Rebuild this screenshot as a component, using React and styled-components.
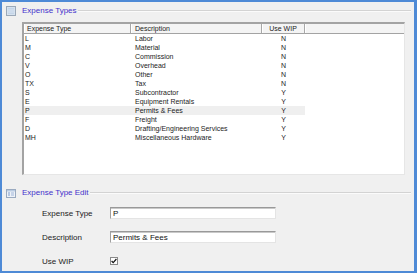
import React from "react";
import styled, { createGlobalStyle } from "styled-components";

const Global = createGlobalStyle`
  html, body { margin: 0; padding: 0; background: #f0f0f0; }
  * { box-sizing: border-box; }
`;

const Frame = styled.div`
  width: 417px;
  height: 273px;
  border: 2px solid #4e8ad6;
  border-right-width: 3px;
  background: #f0f0f0;
  display: flex;
  flex-direction: column;
  padding: 3px 3px 0 4px;
  font-family: "Liberation Sans", Arial, sans-serif;
  color: #1c1c1c;
  overflow: hidden;
`;

const SectionHeader = styled.div`
  display: flex;
  align-items: center;
  height: 12px;
  margin-top: ${(p) => p.$top || 0}px;
`;

const SectionTitle = styled.span`
  font-size: 8px;
  color: #4433cc;
  margin-left: 6px;
  white-space: nowrap;
  line-height: 12px;
`;

const Rule = styled.div`
  flex: 1;
  height: 2px;
  margin-left: 1px;
  border-top: 1px solid #d3d3d3;
  border-bottom: 1px solid #fbfbfb;
`;

const TableBox = styled.div`
  margin: 5px 0 0 16px;
  width: 383px;
  height: 153px;
  background: #ffffff;
  border-left: 2px solid #a3a3a3;
  border-top: 2px solid #a3a3a3;
  border-right: 1px solid #e6e6e6;
  border-bottom: 1px solid #e6e6e6;
  display: flex;
  flex-direction: column;
  font-size: 7px;
`;

const Grid = styled.div`
  display: grid;
  grid-template-columns: 107px 131px 43px 1fr;
`;

const HeadCell = styled.div`
  height: 10px;
  line-height: 9px;
  background: #f4f4f4;
  border-bottom: 1px solid #a3a3a3;
  border-right: ${(p) => (p.$last ? "none" : "1px solid #a8a8a8")};
  box-shadow: inset 1px 0 #ffffff;
  padding-left: ${(p) => (p.$center ? 0 : p.$pad || 3)}px;
  text-align: ${(p) => (p.$center ? "center" : "left")};
  color: #222;
  white-space: nowrap;
`;

const Row = styled.div`
  display: grid;
  grid-template-columns: 107px 131px 43px;
  width: 281px;
  height: 9px;
  line-height: 9px;
  background: ${(p) => (p.$selected ? "#efefef" : "transparent")};
`;

const Cell = styled.div`
  padding-left: ${(p) => (p.$center ? 0 : p.$pad || 1)}px;
  text-align: ${(p) => (p.$center ? "center" : "left")};
  white-space: nowrap;
  overflow: hidden;
`;

const Form = styled.div`
  display: flex;
  flex-direction: column;
  padding-left: 36px;
  margin-top: 8px;
  gap: 12px;
`;

const FormRow = styled.div`
  display: flex;
  align-items: center;
  height: 12px;
`;

const Label = styled.span`
  width: 68px;
  font-size: 8px;
  color: #222;
`;

const TextBox = styled.div`
  width: 166px;
  height: 12px;
  background: #ffffff;
  border-top: 1px solid #999999;
  border-left: 1px solid #a0a0a0;
  border-right: 1px solid #e4e4e4;
  border-bottom: 1px solid #e4e4e4;
  box-shadow: inset 0 1px #c9c9c9;
  font-size: 8px;
  line-height: 11px;
  padding-left: 2px;
  color: #111;
`;

const Check = styled.div`
  width: 8px;
  height: 8px;
  border: 1px solid #8a8a8a;
  background: #fff;
  display: flex;
  align-items: center;
  justify-content: center;
`;

const GridIcon = () => (
  <svg width="10" height="10" viewBox="0 0 10 10">
    <rect x="0.5" y="0.5" width="9" height="9" fill="#d6e2ef" stroke="#9aa8b8" />
    <rect x="2" y="2" width="6" height="6" fill="#c4d5e8" />
    <line x1="2" y1="4" x2="8" y2="4" stroke="#e8eef6" strokeWidth="0.6" />
    <line x1="2" y1="6" x2="8" y2="6" stroke="#e8eef6" strokeWidth="0.6" />
  </svg>
);

const FormIcon = () => (
  <svg width="10" height="9" viewBox="0 0 10 9">
    <rect x="0.5" y="0.5" width="9" height="8" fill="#eef2f8" stroke="#9aaac0" />
    <rect x="1" y="1" width="8" height="1.5" fill="#b9cbe2" />
    <rect x="2" y="3.5" width="2" height="1" fill="#7f9ccc" />
    <rect x="5" y="3.5" width="3" height="1" fill="#9fb6da" />
    <rect x="2" y="5.5" width="2" height="1" fill="#7f9ccc" />
    <rect x="5" y="5.5" width="3" height="1" fill="#9fb6da" />
  </svg>
);

const rows = [
  ["L", "Labor", "N"],
  ["M", "Material", "N"],
  ["C", "Commission", "N"],
  ["V", "Overhead", "N"],
  ["O", "Other", "N"],
  ["TX", "Tax", "N"],
  ["S", "Subcontractor", "Y"],
  ["E", "Equipment Rentals", "Y"],
  ["P", "Permits & Fees", "Y"],
  ["F", "Freight", "Y"],
  ["D", "Drafting/Engineering Services", "Y"],
  ["MH", "Miscellaneous Hardware", "Y"],
];

export default function App() {
  return (
    <>
      <Global />
      <Frame>
        <SectionHeader>
          <GridIcon />
          <SectionTitle>Expense Types</SectionTitle>
          <Rule />
        </SectionHeader>
        <TableBox>
          <Grid>
            <HeadCell $pad={3}>Expense Type</HeadCell>
            <HeadCell $pad={4}>Description</HeadCell>
            <HeadCell $center>Use WIP</HeadCell>
            <HeadCell $last />
          </Grid>
          {rows.map(([code, desc, wip]) => (
            <Row key={code} $selected={code === "P"}>
              <Cell $pad={1}>{code}</Cell>
              <Cell $pad={4}>{desc}</Cell>
              <Cell $center>{wip}</Cell>
            </Row>
          ))}
        </TableBox>
        <SectionHeader $top={12}>
          <FormIcon />
          <SectionTitle>Expense Type Edit</SectionTitle>
          <Rule />
        </SectionHeader>
        <Form>
          <FormRow>
            <Label>Expense Type</Label>
            <TextBox>P</TextBox>
          </FormRow>
          <FormRow>
            <Label>Description</Label>
            <TextBox>Permits &amp; Fees</TextBox>
          </FormRow>
          <FormRow>
            <Label>Use WIP</Label>
            <Check>
              <svg width="6" height="6" viewBox="0 0 6 6">
                <path d="M0.6 3 L2.2 4.7 L5.4 1" fill="none" stroke="#111" strokeWidth="1.2" />
              </svg>
            </Check>
          </FormRow>
        </Form>
      </Frame>
    </>
  );
}
